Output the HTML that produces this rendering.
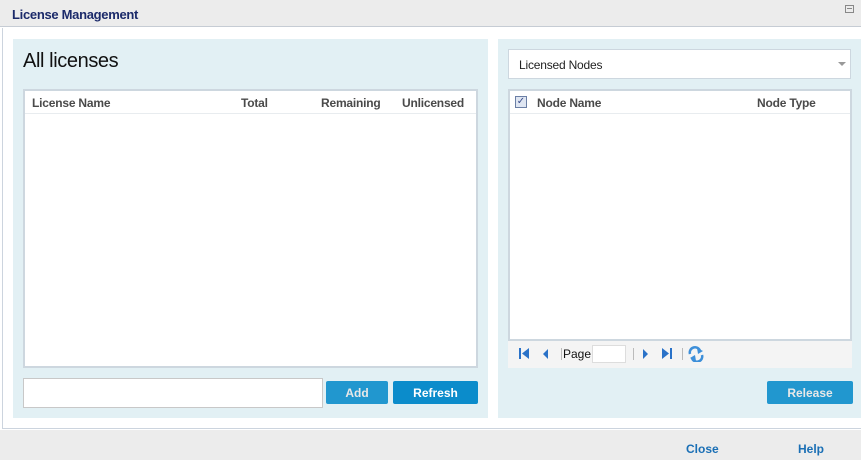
<!DOCTYPE html>
<html><head><style>
*{margin:0;padding:0;box-sizing:border-box}
body{width:861px;height:463px;background:#fff;font-family:"Liberation Sans",Arial,sans-serif;position:relative;overflow:hidden}
.a{position:absolute}
.th{font-size:12px;font-weight:bold;color:#4a4a4a;top:5px;letter-spacing:-0.2px}
.btn{background:#2197cf;color:#e8e8e8;font-weight:bold;font-size:12px;text-align:center;line-height:25px;height:23px;border-radius:2px}
</style></head><body>
<div class="a" style="left:0;top:0;width:861px;height:27px;background:#ececec;border-bottom:1px solid #c6ccd4"></div>
<div class="a" style="left:12px;top:7px;font-size:13px;font-weight:bold;color:#1b2a6a;letter-spacing:-0.3px">License Management</div>
<div class="a" style="left:845px;top:5px;width:9px;height:8px;border:1px solid #888"><div style="margin:2px 1px;height:1px;background:#888"></div></div>
<div class="a" style="left:2px;top:28px;width:859px;height:401px;border-left:1px solid #ccd4de;border-bottom:1px solid #ccd4de"></div>
<div class="a" style="left:0;top:430px;width:861px;height:30px;background:#ececec"></div>
<div class="a" style="left:686px;top:442px;font-size:12px;font-weight:bold;color:#1a6fb5">Close</div>
<div class="a" style="left:798px;top:442px;font-size:12px;font-weight:bold;color:#1a6fb5">Help</div>

<div class="a" style="left:13px;top:39px;width:475px;height:379px;background:#e2f0f4"></div>
<div class="a" style="left:23px;top:50px;font-size:20px;color:#111;letter-spacing:-0.4px">All licenses</div>
<div class="a" style="left:23px;top:89px;width:455px;height:279px;background:#fff;border:2px solid #cdd7df">
<div class="a" style="left:0;top:0;width:451px;height:23px;border-bottom:1px solid #e8ecef"></div>
<div class="a th" style="left:7px">License Name</div>
<div class="a th" style="left:216px">Total</div>
<div class="a th" style="left:296px">Remaining</div>
<div class="a th" style="left:377px">Unlicensed</div>
</div>
<div class="a" style="left:23px;top:378px;width:300px;height:30px;background:#fff;border:1px solid #c8c8c8"></div>
<div class="a btn" style="left:326px;top:381px;width:62px">Add</div>
<div class="a btn" style="left:393px;top:381px;width:85px;background:#0b8ccb;color:#fff">Refresh</div>

<div class="a" style="left:498px;top:39px;width:363px;height:379px;background:#e2f0f4"></div>
<div class="a" style="left:508px;top:49px;width:343px;height:30px;background:#fff;border:1px solid #cdd7df"></div>
<div class="a" style="left:519px;top:58px;font-size:12px;color:#222;letter-spacing:-0.2px">Licensed Nodes</div>
<div class="a" style="left:838px;top:62px;border-left:4px solid transparent;border-right:4px solid transparent;border-top:4px solid #999"></div>
<div class="a" style="left:508px;top:89px;width:344px;height:252px;background:#fff;border:2px solid #cdd7df">
<div class="a" style="left:0;top:0;width:340px;height:23px;border-bottom:1px solid #e8ecef"></div>
<div class="a" style="left:5px;top:5px;width:12px;height:12px;border:1px solid #6b7fa5;background:#dfe6f2;font-size:10px;line-height:10px;text-align:center;color:#3a4d8a">✓</div>
<div class="a th" style="left:27px">Node Name</div>
<div class="a th" style="left:247px">Node Type</div>
</div>
<div class="a" style="left:508px;top:341px;width:344px;height:27px;background:#f4f4f4"></div>
<svg class="a" style="left:516px;top:346px" width="200" height="16">
<g fill="#2a72c8"><rect x="3" y="2" width="2" height="11"/><path d="M13 2 L6 7.5 L13 13Z"/><path d="M32 3 L27 8 L32 13Z"/>
<path d="M127 3 L132 8 L127 13Z"/><path d="M146 2 L153 7.5 L146 13Z"/><rect x="154" y="2" width="2" height="11"/></g>
<g stroke="#bbb"><line x1="45.5" y1="2" x2="45.5" y2="14"/><line x1="117.5" y1="2" x2="117.5" y2="14"/><line x1="166.5" y1="2" x2="166.5" y2="14"/></g>
<g fill="none" stroke="#3d8fd9" stroke-width="2.5"><path d="M174 8 A5 5 0 0 1 184 5"/><path d="M186 9 A5 5 0 0 1 176 12"/></g>
<g fill="#3d8fd9"><path d="M181 2 L187 5 L182 8Z"/><path d="M179 9 L174 12 L180 15Z"/></g>
</svg>
<div class="a" style="left:563px;top:347px;font-size:12px;color:#111">Page</div>
<div class="a" style="left:592px;top:345px;width:34px;height:18px;background:#fff;border:1px solid #ddd"></div>
<div class="a btn" style="left:767px;top:381px;width:86px">Release</div>
</body></html>
